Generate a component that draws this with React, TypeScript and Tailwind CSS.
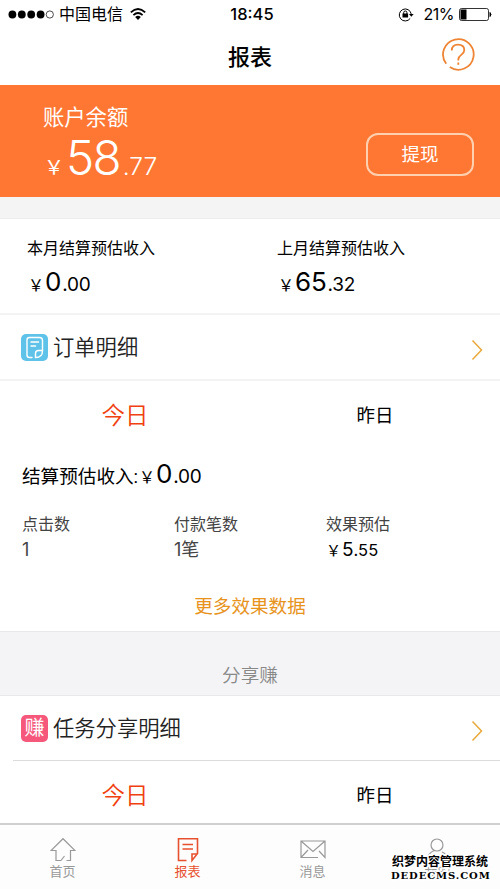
import type { FC, ReactNode } from 'react';

interface MoneyProps {
  whole: string;
  cents: string;
  className?: string;
}

const Money: FC<MoneyProps> = ({ whole, cents, className = '' }) => (
  <div className={`flex items-baseline font-['Inter','Noto_Sans_CJK_SC',sans-serif] leading-7 text-black ${className}`}>
    <span className="ml-[1px] text-[16px]">￥</span>
    <span className="ml-[1px] text-[26px] tracking-[-0.2px]">{whole}</span>
    <span className="ml-[1px] text-[19px] tracking-[-0.200px]">{cents}</span>
  </div>
);

const ChevronIcon: FC = () => (
  <svg className="mt-[5px] h-[22px] w-3" viewBox="0 0 12 22" fill="none" stroke="#e9a93a" strokeWidth="1.5">
    <path d="M1.5 1.5 10.5 11 1.5 20.5" />
  </svg>
);

const OrderIcon: FC = () => (
  <svg className="h-[27px] w-[27px]" viewBox="0 0 27 27" fill="none" stroke="white" strokeWidth="1.4" strokeLinecap="round">
    <rect width="27" height="27" rx="5" fill="#5fc3e9" stroke="none" />
    <path d="M11 23.500H8.500Q6 23.500 6 21V6Q6 3.500 8.500 3.500H18.500Q21.500 3.500 21.500 6.500V17Q21.500 23.500 14.500 23.500V19.500Q14.500 16.500 17.500 16.500H21" />
    <path d="M10 8H17.500M10 12H14.500" />
  </svg>
);

const EarnIcon: FC = () => (
  <div className="flex h-[27px] w-[27px] items-center justify-center rounded-[5px] bg-[#f5587b] text-[20px] leading-none text-white">
    <span>赚</span>
  </div>
);

const HelpIcon: FC = () => (
  <svg className="h-[34px] w-[34px]" viewBox="0 0 34 34" fill="none" stroke="#ee8434" strokeWidth="1.8">
    <path d="M8.800 30.100A15.300 15.300 0 1 0 5.200 26.700" />
    <path d="M10.800 13.400Q10.800 7.600 17 7.600T23.300 13Q23.300 15.500 20.500 17.600Q17.300 20 17.300 22.300V23.500" />
    <path d="M17.300 25.500V27.800" />
  </svg>
);

interface DetailRowProps {
  icon: ReactNode;
  title: string;
}

const DetailRow: FC<DetailRowProps> = ({ icon, title }) => (
  <div className="flex h-16 items-center pr-[17px] pl-[21px]">
    {icon}
    <span className="ml-[5px] flex-1 pt-[2px] text-[21.300px] font-[350] text-[#222]">{title}</span>
    <ChevronIcon />
  </div>
);

const DayTabs: FC = () => (
  <div className="grid h-[72px] shrink-0 grid-cols-2 items-center text-center">
    <span className="text-[23.500px] font-[350] text-[#f0400f]">今日</span>
    <span className="text-[18.500px] text-black">昨日</span>
  </div>
);

const StatusBar: FC = () => (
  <div className="grid h-7 grid-cols-3 items-center px-2 text-black">
    <div className="flex items-center">
      <svg className="h-[9px] w-[46px]" viewBox="0 0 46 9">
        {[4.4, 13.8, 23.2, 32.6].map((cx) => (
          <circle key={cx} cx={cx} cy="4.500" r="3.900" />
        ))}
        <circle cx="41.800" cy="4.500" r="3.600" fill="none" stroke="black" strokeWidth="0.700" />
      </svg>
      <span className="ml-[5px] pt-[2px] text-[16px]">中国电信</span>
      <svg className="ml-[7px] h-3 w-4" viewBox="0 0 16 12" fill="none" stroke="black" strokeWidth="1.800">
        <path d="M0.800 4.400Q8-2.400 15.200 4.400M3.400 7.200Q8 2.900 12.600 7.200" />
        <path d="M5.200 9Q8 6.500 10.800 9L8 11.900Z" fill="black" stroke="none" />
      </svg>
    </div>
    <span className="pl-[4px] text-center font-['Inter','Noto_Sans_CJK_SC',sans-serif] text-[16.500px] font-medium">18:45</span>
    <div className="flex items-center justify-end">
      <svg className="mr-[1px] h-[15px] w-4" viewBox="0 0 16 15" fill="none" stroke="black">
        <path d="M12.200 11.400A6 6 0 1 1 13.200 7" />
        <path d="M11 7H15.700L13.300 9.800Z" fill="black" stroke="none" />
        <rect x="4.500" y="6.500" width="5.600" height="4" fill="black" stroke="none" />
        <path d="M5.700 7V5.500Q5.700 4 7.300 4T8.900 5.500V7" />
      </svg>
      <span className="ml-[9px] font-['Inter','Noto_Sans_CJK_SC',sans-serif] text-[16px] tracking-[-0.5px]">21%</span>
      <svg className="ml-[5px] h-[13px] w-[33px]" viewBox="0 0 33 13" fill="none" stroke="black">
        <rect x="0.500" y="0.500" width="29" height="12" rx="2" strokeWidth="0.800" />
        <rect x="1.500" y="1.500" width="6" height="10" fill="black" stroke="none" />
        <path d="M31 4.500Q33 6.500 31 8.500Z" fill="black" />
      </svg>
    </div>
  </div>
);

interface TabItemProps {
  label: string;
  active?: boolean;
  children: ReactNode;
}

const TabItem: FC<TabItemProps> = ({ label, active, children }) => (
  <div className={`flex flex-col items-center pt-[12px] ${active ? 'text-[#e8512f]' : 'text-[#999]'}`}>
    <svg className="h-[26px] w-[26px]" viewBox="0 0 26 26" fill="none" stroke="currentColor" strokeWidth="1.200">
      {children}
    </svg>
    <span className="text-[13px] leading-[18px]">{label}</span>
  </div>
);

const stats = [
  { label: '点击数', value: '1' },
  { label: '付款笔数', value: '1笔' },
];

const outline =
  '[text-shadow:-1px_-1px_0_#fff,1px_-1px_0_#fff,-1px_1px_0_#fff,1px_1px_0_#fff,0_2px_0_#fff,0_-2px_0_#fff,2px_0_0_#fff,-2px_0_0_#fff]';

export default function App() {
  return (
    <div className="flex h-[889px] w-[500px] flex-col overflow-hidden bg-white font-['Roboto','Noto_Sans_CJK_SC',sans-serif]">
      <header className="h-[85px] shrink-0">
        <StatusBar />
        <div className="grid h-[57px] grid-cols-3 items-center pr-[25px]">
          <span />
          <h1 className="pt-[2px] pl-[25px] text-center text-[22px] font-medium text-black">报表</h1>
          <div className="flex justify-end pb-[6px]">
            <HelpIcon />
          </div>
        </div>
      </header>

      <section className="flex h-28 shrink-0 justify-between bg-[#ff7733] pr-[26px] pl-[43px] text-white">
        <div className="pt-[18px]">
          <div className="text-[21.300px] leading-[30px]">账户余额</div>
          <div className="flex items-baseline font-['Inter','Noto_Sans_CJK_SC',sans-serif] leading-[50px]">
            <span className="ml-[1px] text-[20px]">￥</span>
            <span className="ml-[2px] text-[47.500px] font-[350] tracking-[-1.8px]">58</span>
            <span className="ml-[3px] text-[24.500px] font-[350]">.77</span>
          </div>
        </div>
        <button className="mt-[48px] h-[43px] w-[108px] rounded-[12px] border-2 border-[#ffd0b0] pt-[3px] text-[18.500px]">提现</button>
      </section>

      <div className="h-[22px] shrink-0 border-b border-[#ececec] bg-[#f4f4f5]" />

      <section className="grid h-24 shrink-0 grid-cols-2 border-b-2 border-[#f3f3f3] px-[27px] pt-[18px]">
        <div>
          <div className="text-[16px] leading-6 text-black">本月结算预估收入</div>
          <Money whole="0" cents=".00" className="mt-[7px]" />
        </div>
        <div className="pl-[27px]">
          <div className="text-[16px] leading-6 text-black">上月结算预估收入</div>
          <Money whole="65" cents=".32" className="mt-[7px]" />
        </div>
      </section>

      <section className="h-[316px] shrink-0">
        <div className="border-b-2 border-[#f3f3f3]">
          <DetailRow icon={<OrderIcon />} title="订单明细" />
        </div>
        <DayTabs />
        <div className="flex items-baseline pt-[7px] pl-[22px] text-black">
          <span className="text-[18.600px] leading-8">结算预估收入:</span>
          <Money whole="0" cents=".00" />
        </div>
        <div className="grid grid-cols-[152px_152px_1fr] pt-[18px] pl-[22px] font-['Inter','Noto_Sans_CJK_SC',sans-serif] text-[16px] leading-[26px] text-[#444]">
          {stats.map((s) => (
            <div key={s.label}>
              <div>{s.label}</div>
              <div className="text-[18px]">{s.value}</div>
            </div>
          ))}
          <div>
            <div>效果预估</div>
            <div className="flex items-baseline text-black">
              <span className="text-[15px]">￥</span>
              <span className="ml-[1px] text-[19px]">5</span>
              <span className="text-[16.500px]">.55</span>
            </div>
          </div>
        </div>
        <div className="pt-[27px] text-center text-[18.600px] leading-8 text-[#e8931c]">更多效果数据</div>
      </section>

      <div className="h-[65px] shrink-0 border-y border-[#e8e8ea] bg-[#f4f4f6] pt-[28px] text-center text-[18.600px] leading-8 font-[350] text-[#888]">
        分享赚
      </div>

      <section className="h-[127px] shrink-0">
        <DetailRow icon={<EarnIcon />} title="任务分享明细" />
        <div className="ml-[13px] h-px bg-[#dcdcdc]" />
        <DayTabs />
      </section>

      <nav className="relative grid h-[66px] shrink-0 grid-cols-4 border-t-2 border-[#d0d0d0] bg-[#fdfdfd]">
        <TabItem label="首页">
          <path d="M11 23.500H6V13.500H1L13 1.700 25 13.500H20.500V23.500H16.500M11 23.500 14.500 19" />
        </TabItem>
        <TabItem label="报表" active>
          <path d="M11.500 23.500H3.500V1.700H22.500V16.500L17 23.500V17H22.500M7.500 7.500H18M7.500 12H18" strokeWidth="1.600" />
        </TabItem>
        <TabItem label="消息">
          <path d="M18 20.500H1V4H25V20.500L19 14M1 4 13 14.500 25 4M1 20.500 8 13" />
        </TabItem>
        <TabItem label="我的">
          <circle cx="12" cy="8" r="6" />
          <path d="M9 13.500Q3 16 2 23.500H23Q22 17 17 15" />
        </TabItem>
        <div className={`absolute top-[30px] left-[391px] w-[98px] text-center font-bold text-black ${outline}`}>
          <div className="text-[12px] leading-[15px] whitespace-nowrap">织梦内容管理系统</div>
          <div className="font-['DejaVu_Serif',serif] text-[10px] leading-[12px] font-bold tracking-[0.900px] whitespace-nowrap">DEDECMS.COM</div>
        </div>
      </nav>
    </div>
  );
}
